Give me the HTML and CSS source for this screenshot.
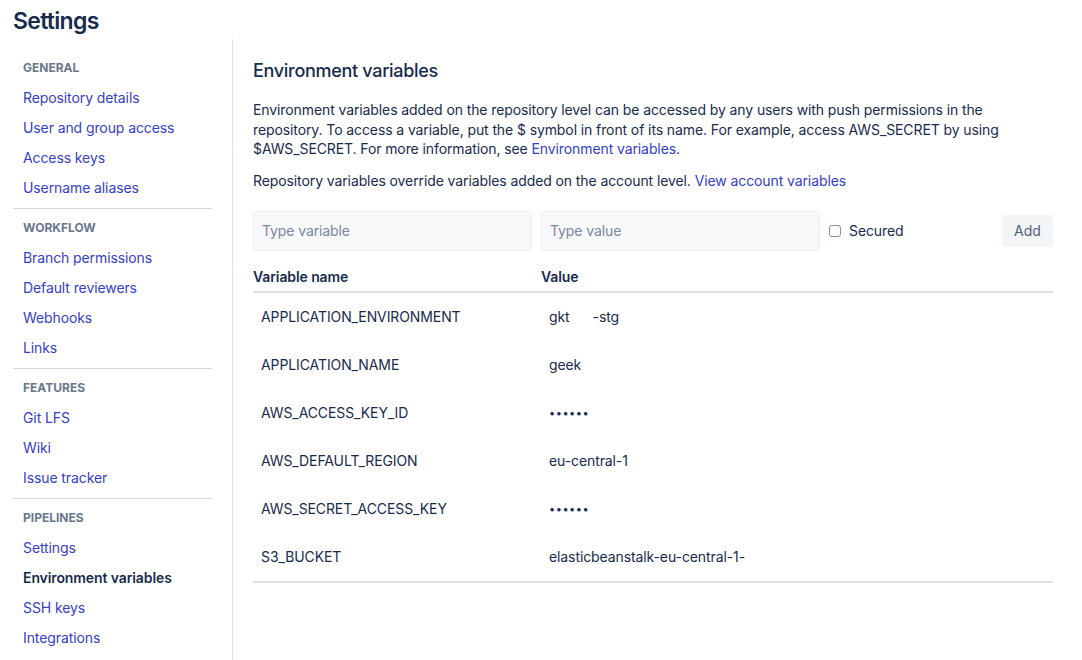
FILE: index.html
```html
<!DOCTYPE html>
<html>
<head>
<meta charset="utf-8">
<link rel="stylesheet" href="styles.css">
</head>
<body>
<header class="top"><h1 class="title">Settings</h1></header>
<div class="layout">
  <nav class="sidebar">
    <div class="group">
      <div class="group-title">GENERAL</div>
      <a class="nav-link">Repository details</a>
      <a class="nav-link">User and group access</a>
      <a class="nav-link">Access keys</a>
      <a class="nav-link">Username aliases</a>
    </div>
    <div class="group">
      <div class="group-title">WORKFLOW</div>
      <a class="nav-link">Branch permissions</a>
      <a class="nav-link">Default reviewers</a>
      <a class="nav-link">Webhooks</a>
      <a class="nav-link">Links</a>
    </div>
    <div class="group">
      <div class="group-title">FEATURES</div>
      <a class="nav-link">Git LFS</a>
      <a class="nav-link">Wiki</a>
      <a class="nav-link">Issue tracker</a>
    </div>
    <div class="group">
      <div class="group-title">PIPELINES</div>
      <a class="nav-link">Settings</a>
      <a class="nav-link active">Environment variables</a>
      <a class="nav-link">SSH keys</a>
      <a class="nav-link">Integrations</a>
    </div>
  </nav>
  <main class="main">
    <h2 class="heading">Environment variables</h2>
    <p class="desc">Environment variables added on the repository level can be accessed by any users with push permissions in the repository. To access a variable, put the $ symbol in front of its name. For example, access AWS_SECRET by using $AWS_SECRET. For more information, see <a class="link">Environment variables</a>.</p>
    <p class="desc second">Repository variables override variables added on the account level. <a class="link">View account variables</a></p>
    <div class="form-row">
      <input class="field" type="text" placeholder="Type variable">
      <input class="field" type="text" placeholder="Type value">
      <label class="secured"><span class="box"></span>Secured</label>
      <button class="add">Add</button>
    </div>
    <div class="table">
      <div class="thead">
        <div class="col-name">Variable name</div>
        <div class="col-value">Value</div>
      </div>
      <div class="tbody">
        <div class="row"><div class="cell-name">APPLICATION_ENVIRONMENT</div><div class="cell-value pre">gkt      -stg</div></div>
        <div class="row"><div class="cell-name">APPLICATION_NAME</div><div class="cell-value">geek</div></div>
        <div class="row"><div class="cell-name">AWS_ACCESS_KEY_ID</div><div class="cell-value dots">••••••</div></div>
        <div class="row"><div class="cell-name">AWS_DEFAULT_REGION</div><div class="cell-value">eu-central-1</div></div>
        <div class="row"><div class="cell-name">AWS_SECRET_ACCESS_KEY</div><div class="cell-value dots">••••••</div></div>
        <div class="row"><div class="cell-name">S3_BUCKET</div><div class="cell-value">elasticbeanstalk-eu-central-1-</div></div>
      </div>
    </div>
  </main>
</div>
</body>
</html>
```
FILE: styles.css
```css
* { box-sizing: border-box; }
html, body { margin: 0; padding: 0; background: #fff; }
body {
  font-family: Inter, "Noto Sans", "Liberation Sans", sans-serif;
  font-size: 14px;
  letter-spacing: -0.1px;
  color: #172b4d;
  width: 1082px;
  height: 660px;
  overflow: hidden;
}
.top { height: 39px; padding: 0 13px; }
.title {
  margin: 0;
  font-size: 23px;
  font-weight: 600;
  line-height: 42px;
  letter-spacing: -0.7px;
  color: #172b4d;
}
.layout { display: flex; height: 621px; }
.sidebar {
  width: 233px;
  padding: 14px 20px 0 13px;
  border-right: 1px solid #dfe1e6;
  flex: none;
}
.group { border-bottom: 1px solid #d5d8de; padding-bottom: 5px; margin-bottom: 4px; }
.group:last-child { border-bottom: none; }
.group-title {
  padding-left: 10px;
  line-height: 30px;
  font-size: 12px;
  font-weight: 700;
  letter-spacing: 0;
  color: #6b778c;
}
.nav-link {
  display: block;
  padding-left: 10px;
  line-height: 30px;
  color: #3540c8;
  text-decoration: none;
}
.nav-link.active { color: #172b4d; font-weight: 600; }
.main { flex: 1; padding: 20px 29px 0 20px; }
.heading {
  margin: 0;
  font-size: 18px;
  font-weight: 500;
  line-height: 24px;
  letter-spacing: -0.3px;
}
.desc { margin: 17px 0 0; line-height: 19.7px; }
.desc.second { margin-top: 12px; }
.link { color: #3540c8; text-decoration: none; }
.form-row { display: flex; align-items: center; margin-top: 20px; gap: 9px; }
.field {
  width: 279px;
  height: 40px;
  background: #f8f9fb;
  border: 1px solid #eef0f3;
  border-radius: 3px;
  padding: 0 8px;
  font-family: inherit;
  font-size: 14px;
  letter-spacing: -0.1px;
  color: #172b4d;
  outline: none;
}
.field::placeholder { color: #7a869a; }
.secured { display: flex; align-items: center; gap: 8px; color: #172b4d; }
.box {
  width: 12px;
  height: 12px;
  border: 1px solid #8993a4;
  border-radius: 3px;
  background: #fff;
}
.add {
  margin-left: auto;
  height: 32px;
  width: 51px;
  border: none;
  border-radius: 3px;
  background: #f4f5f7;
  color: #505f79;
  font-family: inherit;
  font-size: 14px;
  padding: 0;
}
.table { margin-top: 13px; }
.thead {
  display: flex;
  padding: 3px 0 4px;
  line-height: 20px;
  font-weight: 600;
  border-bottom: 2px solid #dfe1e6;
}
.col-name { width: 288px; }
.tbody { border-bottom: 2px solid #dfe1e6; }
.row { display: flex; height: 48px; align-items: center; }
.cell-name { width: 288px; padding-left: 8px; }
.cell-value { padding-left: 8px; }
.pre { white-space: pre; }
.dots { font-size: 11px; letter-spacing: 0.5px; }
```
